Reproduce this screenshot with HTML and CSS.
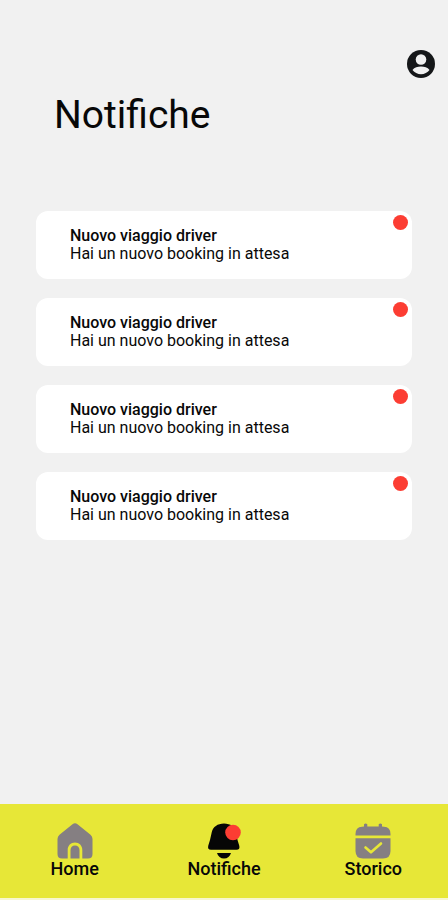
FILE: index.html
```html
<!DOCTYPE html>
<html lang="it">
  <head>
    <meta charset="UTF-8" />
    <meta name="viewport" content="width=device-width, initial-scale=1.0" />
    <title>Notifiche</title>
    <link rel="stylesheet" href="styles.css">
  </head>
  <body>
    <header>
      <button class="profile" aria-label="Profilo">
        <svg viewBox="0 0 28 28" width="28" height="28">
          <circle cx="14" cy="14" r="14" fill="#151719" />
          <circle cx="14" cy="9.500" r="5.300" fill="#f1f1f1" />
          <path d="M5.500 20C7.500 17.500 10.500 16.600 14 16.600S20.500 17.500 22.500 20C20.500 22.600 17.500 24.200 14 24.200S7.500 22.600 5.500 20Z" fill="#f1f1f1" />
        </svg>
      </button>
      <h1>Notifiche</h1>
    </header>

    <main>
      <ul class="notifications">
        <li class="card">
          <h2>Nuovo viaggio driver</h2>
          <p>Hai un nuovo booking in attesa</p>
          <span class="dot"></span>
        </li>
        <li class="card">
          <h2>Nuovo viaggio driver</h2>
          <p>Hai un nuovo booking in attesa</p>
          <span class="dot"></span>
        </li>
        <li class="card">
          <h2>Nuovo viaggio driver</h2>
          <p>Hai un nuovo booking in attesa</p>
          <span class="dot"></span>
        </li>
        <li class="card">
          <h2>Nuovo viaggio driver</h2>
          <p>Hai un nuovo booking in attesa</p>
          <span class="dot"></span>
        </li>
      </ul>
    </main>

    <nav>
      <a href="#home">
        <svg viewBox="0 0 36 36" width="36" height="36">
          <path d="M15.500 1.300Q18 -.6 20.500 1.300L33.500 11.800Q35.500 13.500 35.500 16V31Q35.500 35.500 31 35.500H25.300V27C25.300 22.600 22.200 19.600 18 19.600S10.700 22.600 10.700 27V35.500H5Q.5 35.500 .5 31V16Q.5 13.500 2.500 11.800Z" fill="#857f82" />
          <path d="M13.500 35.500V27C13.500 24.200 15.300 22.400 18 22.400S22.500 24.200 22.500 27V35.500Z" fill="#857f82" />
        </svg>
        Home
      </a>
      <a href="#notifiche">
        <svg viewBox="0 0 36 36" width="36" height="36">
          <path d="M18 .5C11.500 .5 7 4 5.800 9L4 17L2.300 22.500C1.500 25.300 2.500 26.800 5 26.800H30.500C33 26.800 34 25.300 33.200 22.500L31.500 17L30 9C28.800 4 24.500 .5 18 .5Z" fill="#060606" />
          <path d="M11 30H25C24 33.500 21.500 35.500 18 35.500S12 33.500 11 30Z" fill="#060606" />
          <circle cx="27" cy="9.500" r="7.800" fill="#fc3d33" />
        </svg>
        Notifiche
      </a>
      <a href="#storico">
        <svg viewBox="0 0 36 36" width="36" height="36">
          <path d="M.5 12.500V11Q.5 4 7 3.700L9 3.500V1.300Q10.700 -.3 12.300 1.300V3.500H23.700V1.300Q25.300 -.3 27 1.300V3.500L29 3.700Q35.500 4 35.500 11V12.500Z" fill="#857f82" />
          <path d="M.5 15.300H35.500V28Q35.500 35.500 28 35.500H8Q.5 35.500 .5 28Z" fill="#857f82" />
          <path d="M10.500 24.500L16 29.300L26 20.500" fill="none" stroke="#e7e737" stroke-width="2.600" stroke-linecap="round" stroke-linejoin="round" />
        </svg>
        Storico
      </a>
    </nav>
  </body>
</html>
```
FILE: styles.css
```css
* {
  box-sizing: border-box;
}

body {
  display: flex;
  flex-direction: column;
  min-height: 100vh;
  margin: 0;
  font-family: Roboto, sans-serif;
  background-color: #f1f1f1;
  color: #080808;
}

h1,
h2,
p {
  margin: 0;
}

header {
  display: flex;
  flex-direction: column;
  padding: 50px 13px 0 54px;
}

.profile {
  align-self: flex-end;
  height: 28px;
  padding: 0;
  border: none;
  background: none;
  cursor: pointer;
}

h1 {
  margin-top: 12px;
  font-size: 39px;
  font-weight: 400;
  line-height: 50px;
}

main {
  flex: 1;
  padding: 71px 36px 20px;
}

.notifications {
  display: flex;
  flex-direction: column;
  gap: 19px;
  margin: 0;
  padding: 0;
  list-style: none;
}

.card {
  position: relative;
  padding: 16px 34px;
  border-radius: 12px;
  background-color: #ffffff;
}

.card h2,
.card p {
  font-size: 16px;
  line-height: 18px;
}

.card h2 {
  font-weight: 500;
}

.dot {
  position: absolute;
  top: 4px;
  right: 4px;
  width: 15px;
  height: 15px;
  border-radius: 50%;
  background-color: #fc3d33;
}

nav {
  display: grid;
  grid-template-columns: repeat(3, 1fr);
  padding: 19px 0;
  border-bottom: 2px solid #f7f7d0;
  background-color: #e7e737;
}

nav a {
  display: flex;
  flex-direction: column;
  align-items: center;
  color: #080808;
  font-size: 18px;
  font-weight: 500;
  line-height: 20px;
  text-decoration: none;
}
```
